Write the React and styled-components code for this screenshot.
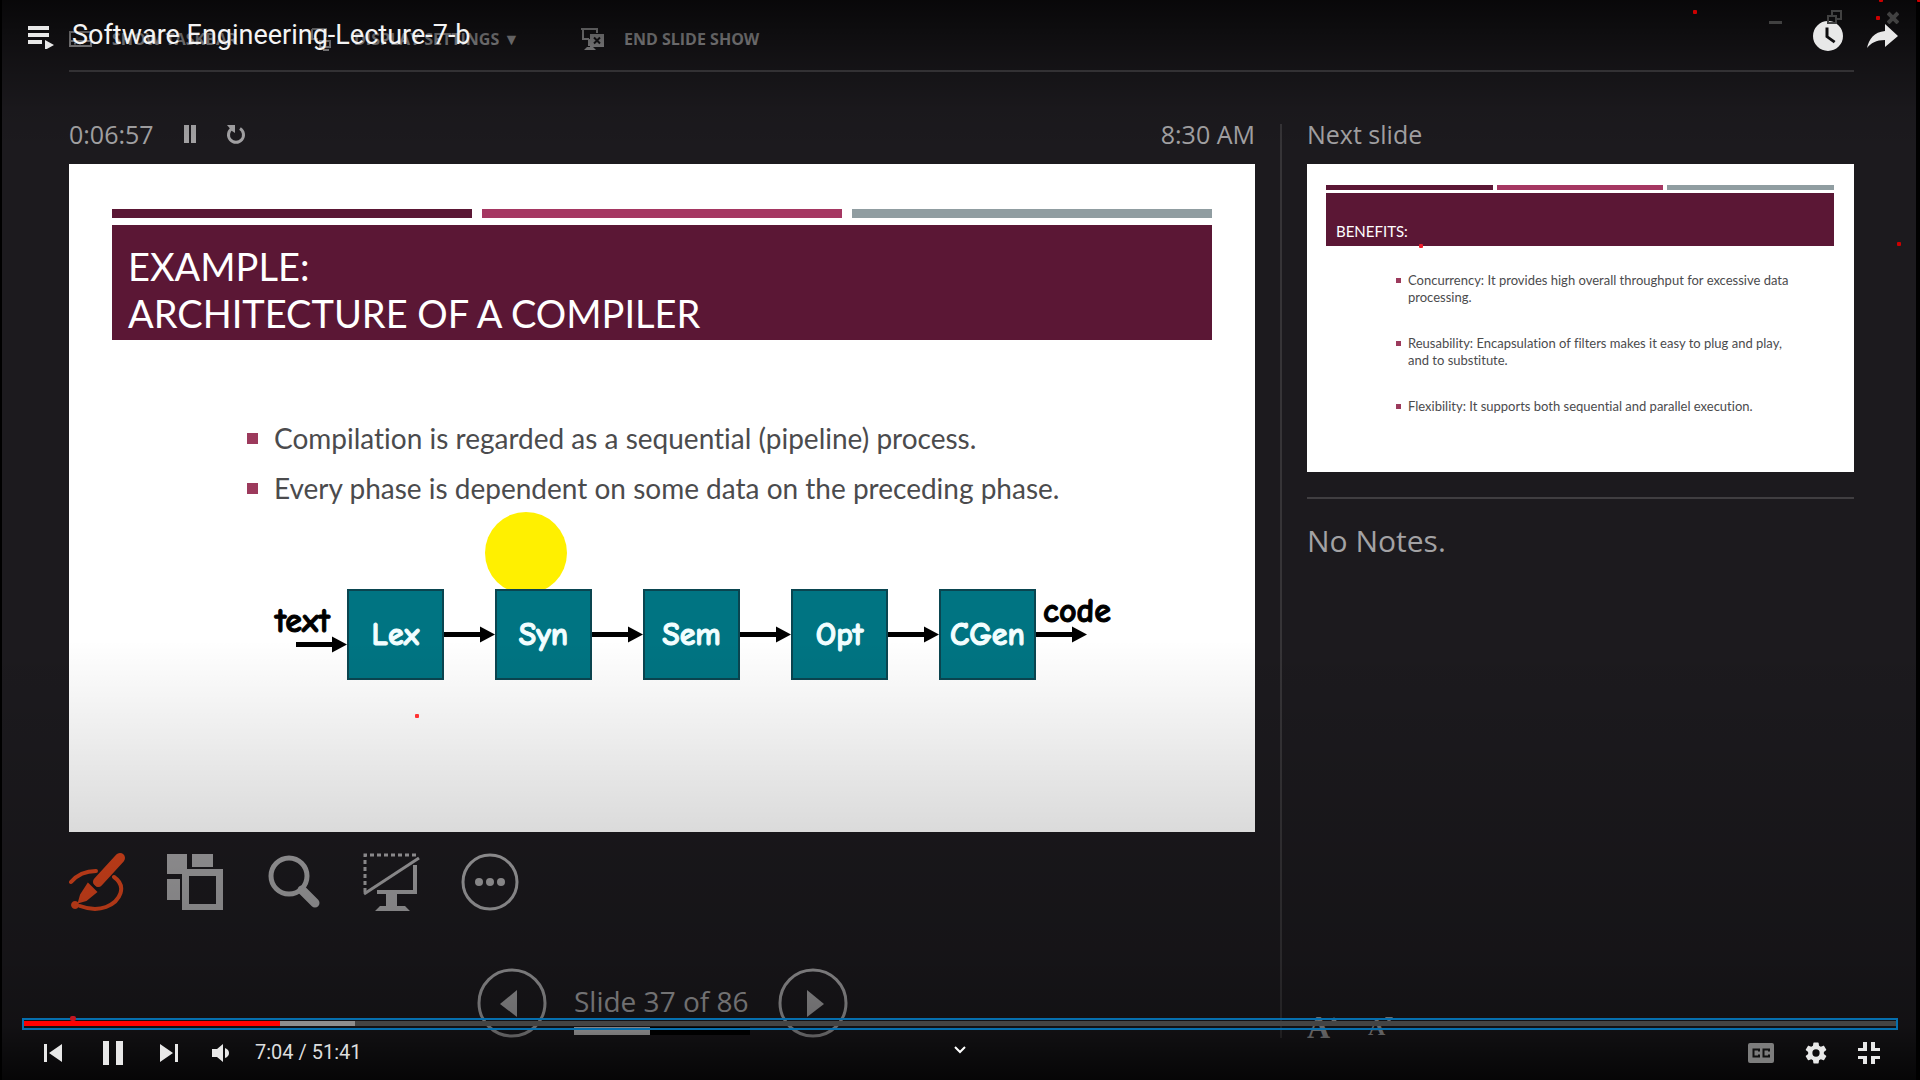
import React from "react";
import styled, { createGlobalStyle } from "styled-components";

const ui = `"Open Sans", "Noto Sans", sans-serif`;
const body = `Lato, "Open Sans", sans-serif`;
const comic = `"Comic Sans MS", "Comic Neue", Lato, sans-serif`;

const Global = createGlobalStyle`
  *, *::before, *::after { box-sizing: border-box; }
  body { margin: 0; background: #000; overflow: hidden; }
  button { border: 0; padding: 0; margin: 0; background: none; color: inherit; font: inherit; display: inline-flex; align-items: center; justify-content: center; }
  h1, h2, p, ul { margin: 0; padding: 0; font-weight: 400; }
  svg { display: block; }
`;

const Player = styled.main`
  position: relative;
  min-height: 100vh;
  background: #000;
  padding: 0 4px 0 2px;
  display: flex;
  overflow: hidden;
`;

/* ---------- presenter view ---------- */
const Presenter = styled.section`
  flex: 1;
  min-width: 0;
  display: flex;
  flex-direction: column;
  background: #1c1a1e;
  color: #a3a2a4;
  font-family: ${ui};
  padding: 0 62px 0 67px;
`;
const TopBar = styled.header`
  height: 72px;
  flex: none;
  display: flex;
  align-items: center;
  padding-top: 8px;
  border-bottom: 2px solid #454346;
`;
const TopAction = styled.button`
  && {
    justify-content: flex-start;
    gap: ${(p) => p.$gap}px;
    width: ${(p) => p.$w}px;
    font-size: 16px;
    line-height: 24px;
    font-weight: 700;
    font-family: ${ui};
    white-space: nowrap;
    color: #b8b7b9;
  }
`;
const Columns = styled.div`
  display: grid;
  grid-template-columns: minmax(0, 1186fr) 2px minmax(0, 547fr);
  column-gap: 25px;
  padding: 48px 0 42px;
  flex: 1;
`;
const Rule = styled.div`
  background: #363437;
  margin-top: 4px;
`;
const MainCol = styled.div`
  display: flex;
  flex-direction: column;
`;
const SideCol = styled.aside`
  display: flex;
  flex-direction: column;
`;
const Status = styled.div`
  display: flex;
  align-items: center;
  gap: 30px;
  height: 28px;
  margin-bottom: 16px;
  font-size: 25px;
  line-height: 28px;
`;
const Clock = styled.time`
  margin-left: auto;
`;
const Slide = styled.article`
  position: relative;
  background: #fff;
  aspect-ratio: ${(p) => p.$ratio};
  padding: ${(p) => p.$pad};
  color: #4b4b4d;
  font-family: ${body};
  font-variant-ligatures: none;
`;
const Stripes = styled.div`
  display: grid;
  grid-template-columns: repeat(3, 1fr);
  gap: ${(p) => p.$gap}px;
  margin-bottom: ${(p) => p.$below}px;
`;
const Stripe = styled.span`
  height: ${(p) => p.$h}px;
  background: ${(p) => p.$c};
`;
const Banner = styled.div`
  display: flex;
  align-items: flex-end;
  height: ${(p) => p.$h}px;
  padding: ${(p) => p.$pad};
  background: #5b1735;
  color: #fff;
`;
const Title = styled.h1`
  font-size: 38px;
  line-height: 47px;
`;
const SmallTitle = styled.h2`
  font-size: 15px;
  line-height: 20px;
`;
const Bullets = styled.ul`
  list-style: none;
  display: flex;
  flex-direction: column;
  gap: ${(p) => p.$gap}px;
  padding: ${(p) => p.$pad};
  font-size: ${(p) => p.$size}px;
  line-height: ${(p) => p.$lh}px;
`;
const Bullet = styled.li`
  display: flex;
  white-space: nowrap;
  gap: ${(p) => p.$gap}px;
  &::before {
    content: "";
    flex: none;
    width: ${(p) => p.$dot}px;
    height: ${(p) => p.$dot}px;
    margin-top: ${(p) => p.$top}px;
    background: #9c3a5c;
  }
`;
const Pipeline = styled.div`
  position: relative;
  display: flex;
  align-items: center;
  margin: 85px 0 0 163px;
  font-family: ${comic};
  font-weight: 700;
  font-size: 34px;
  -webkit-text-stroke: 1px currentColor;
`;
const Spot = styled.span`
  position: absolute;
  left: 210px;
  top: -77px;
  width: 82px;
  height: 82px;
  border-radius: 50%;
  background: #fff000;
`;
const Stage = styled.div`
  position: relative;
  width: 97px;
  height: 91px;
  flex: none;
  display: flex;
  align-items: center;
  justify-content: center;
  background: #007482;
  border: 2px solid #0a4550;
  color: #f2feff;
  font-size: 32px;
`;
const Port = styled.div`
  display: flex;
  flex-direction: column;
  flex: none;
  width: ${(p) => p.$w}px;
  align-items: ${(p) => p.$align};
  padding-bottom: ${(p) => p.$lift}px;
  color: #000;
  line-height: 30px;
`;
const PortLabel = styled.span`
  align-self: ${(p) => p.$side};
`;
const Tools = styled.div`
  display: flex;
  gap: 41px;
  margin-top: 21px;
`;
const Pager = styled.nav`
  display: flex;
  justify-content: center;
  align-items: flex-start;
  gap: 27px;
  margin-top: 56px;
`;
const PageInfo = styled.div`
  width: 176px;
  font-size: 28px;
  line-height: 32px;
  padding-top: 18px;
  white-space: nowrap;
`;
const Meter = styled.div`
  height: 8px;
  margin-top: 10px;
  background: #000;
`;
const MeterFill = styled.div`
  height: 100%;
  background: #d0cfd1;
`;
const Notes = styled.p`
  margin-top: 25px;
  padding-top: 23px;
  border-top: 2px solid #403e41;
  font-size: 30px;
  line-height: 38px;
`;
const FontTools = styled.div`
  display: flex;
  align-items: flex-end;
  gap: 30px;
  margin-top: auto;
  font-family: "Liberation Serif", serif;
  font-weight: 700;
`;
const FontButton = styled.button`
  && {
    align-items: flex-start;
    font-size: ${(p) => p.$size}px;
    line-height: 21px;
    font-family: "Liberation Serif", serif;
    font-weight: 700;
  }
`;

/* ---------- player chrome, drawn over the video ---------- */
const Chrome = styled.div`
  position: absolute;
  inset: 0;
  display: flex;
  flex-direction: column;
  color: #e8e8e8;
  font-family: Roboto, sans-serif;
  background:
    linear-gradient(to bottom, rgba(0,0,0,.7) 0, rgba(0,0,0,.32) 60px, rgba(0,0,0,.07) 110px, rgba(0,0,0,0) 150px),
    linear-gradient(to top, rgba(0,0,0,.78) 0, rgba(0,0,0,.35) 55px, rgba(0,0,0,.24) 120px, rgba(0,0,0,.14) 250px, rgba(0,0,0,.05) 370px, rgba(0,0,0,0) 440px);
`;
const Heading = styled.header`
  display: flex;
  align-items: center;
  height: 72px;
  padding: 0 22px 0 28px;
`;
const VideoTitle = styled.h1`
  font-size: 27px;
  line-height: 32px;
  margin-left: 17px;
  padding-bottom: 2px;
  color: #f4f4f4;
`;
const HeadActions = styled.div`
  display: flex;
  align-items: center;
  gap: 24px;
  margin-left: auto;
`;
const Controls = styled.footer`
  margin-top: auto;
  padding: 0 22px;
`;
const Track = styled.div`
  position: relative;
  height: 12px;
  border: 2px solid #066fae;
  padding: 1px 0 2px;
`;
const Rail = styled.div`
  display: flex;
  height: 5px;
  background: #444;
`;
const Part = styled.div`
  background: ${(p) => p.$c};
`;
const Knob = styled.span`
  position: absolute;
  left: 46px;
  top: -4px;
  width: 6px;
  height: 5px;
  border-radius: 2px;
  background: #c41722;
`;
const Seek = styled.input`
  position: absolute;
  inset: 0;
  width: 100%;
  height: 100%;
  margin: 0;
  opacity: 0;
`;
const Row = styled.div`
  display: grid;
  grid-template-columns: 1fr auto 1fr;
  align-items: center;
  height: 50px;
  padding-bottom: 4px;
`;
const Group = styled.div`
  display: flex;
  align-items: center;
  justify-content: ${(p) => (p.$end ? "flex-end" : "flex-start")};
  gap: ${(p) => p.$gap}px;
  padding: 0 ${(p) => (p.$end ? 18 : 0)}px 0 ${(p) => (p.$end ? 0 : 22)}px;
`;
const Time = styled.span`
  font-size: 20px;
  line-height: 24px;
  color: #ddd;
  margin-left: -8px;
  padding-bottom: 2px;
`;
const WindowButtons = styled.div`
  position: absolute;
  top: 10px;
  right: 21px;
  display: flex;
  align-items: center;
  gap: 45px;
  color: #414141;
`;
const Mark = styled.span`
  position: absolute;
  width: 4px;
  height: 4px;
  border-radius: 1px;
  background: ${(p) => p.$c || "#c00"};
`;

const marks = [
  { x: 1693, y: 10 }, { x: 1876, y: 16 }, { x: 1879, y: -2 }, { x: 1917, y: -2 },
  { x: 1897, y: 242 }, { x: 1419, y: 244, c: "#f01f2d" }, { x: 415, y: 714, c: "#f33" },
];

const Arrow = () => (
  <svg width="51" height="17" viewBox="0 0 51 17" fill="#000">
    <path d="M0 6h36V0.500l15 8-15 8V11H0z" />
  </svg>
);

const Icon = ({ w, h, label, vb, children }) => (
  <button type="button" aria-label={label}>
    <svg width={w} height={h} viewBox={vb || `0 0 ${w} ${h}`} fill="currentColor">{children}</svg>
  </button>
);

const stages = ["Lex", "Syn", "Sem", "Opt", "CGen"];
const stripeColors = ["#5b1735", "#a53762", "#909da1"];

export default function App() {
  return (
    <Player>
      <Global />
      <Presenter>
        <TopBar>
          <TopAction $w={241} $gap={20}>
            <svg width="23" height="16" viewBox="0 0 23 16" fill="none" stroke="currentColor" strokeWidth="2"><path d="M1 1h21v14H1zM1 10h21M5 12.500h2M10 12.500h2" /></svg>
            SHOW TASKBAR
          </TopAction>
          <TopAction $w={271} $gap={22}>
            <svg width="22" height="24" viewBox="0 0 22 24" fill="none" stroke="currentColor" strokeWidth="2"><path d="M2 2h14v8M2 2v10h6M10 14h10v6H10zM13 23h6" /></svg>
            DISPLAY SETTINGS ▼
          </TopAction>
          <TopAction $w={200} $gap={20}>
            <svg width="23" height="24" viewBox="0 0 23 24" fill="none" stroke="currentColor" strokeWidth="2">
              <path d="M0 2h17M2 2v10h6M16 2v4M8 12v7" />
              <path d="M10 8h12v11H10z" fill="currentColor" />
              <path d="M13 10.500l6 6M19 10.500l-6 6" stroke="#1c1a1e" />
              <path d="M3 23l3-3h6l3 3z" fill="currentColor" stroke="none" />
            </svg>
            END SLIDE SHOW
          </TopAction>
        </TopBar>
        <Columns>
          <MainCol>
            <Status>
              <span>0:06:57</span>
              <Icon w={12} h={20} label="Pause timer"><path d="M0 1h5v18H0zM7 1h5v18H7z" /></Icon>
              <Icon w={20} h={20} label="Restart timer">
                <path d="M14 4.500a7.500 7.500 0 1 1-8 0" fill="none" stroke="currentColor" strokeWidth="3" />
                <path d="M1 1h8v8l-3-2z" />
              </Icon>
              <Clock>8:30 AM</Clock>
            </Status>
            <Slide $ratio="1186 / 668" $pad="45px 43px 0 43px">
              <Stripes $gap={10} $below={7}>
                {stripeColors.map((c) => <Stripe key={c} $c={c} $h={9} />)}
              </Stripes>
              <Banner $h={115} $pad="0 16px 3px">
                <Title>EXAMPLE:<br />ARCHITECTURE OF A COMPILER</Title>
              </Banner>
              <Bullets $pad="82px 0 0 135px" $gap={18} $size={28} $lh={32}>
                <Bullet $gap={16} $dot={11} $top={11}>Compilation is regarded as a sequential (pipeline) process.</Bullet>
                <Bullet $gap={16} $dot={11} $top={11}>Every phase is dependent on some data on the preceding phase.</Bullet>
              </Bullets>
              <Pipeline>
                <Spot />
                <Port $w={72} $align="flex-end" $lift={10}><PortLabel $side="flex-start">text</PortLabel><Arrow /></Port>
                {stages.map((s, i) => (
                  <React.Fragment key={s}>
                    {i > 0 && <Arrow />}
                    <Stage>{s}</Stage>
                  </React.Fragment>
                ))}
                <Port $w={75} $align="flex-start" $lift={30}><PortLabel $side="flex-end">code</PortLabel><Arrow /></Port>
              </Pipeline>
            </Slide>
            <Tools>
              <Icon w={57} h={58} label="Pen and laser pointer tools">
                <g fill="none" stroke="#d8441c" strokeLinecap="round">
                  <path d="M2 29C8 22 17 18 27 18M45 24C58 33 52 48 37 54C29 57 19 56 11 53" strokeWidth="4" />
                  <path d="M51 5L29 29" strokeWidth="10" />
                </g>
                <path d="M19 31l8 8L17 47l-7 2 2-7zM6 49a3 3 0 1 0 .1 0z" fill="#d8441c" stroke="#d8441c" strokeWidth="2" />
                <path d="M20 28l10 10" stroke="#18161a" strokeWidth="2" />
              </Icon>
              <Icon w={57} h={58} label="See all slides">
                <path d="M0 1h20v15H15v5H0zM25 1h21v13H25zM0 26h13v21H0zM15 16h41v41H15zM22 23v28h27V23z" fillRule="evenodd" />
              </Icon>
              <Icon w={57} h={58} label="Zoom into the slide">
                <g fill="none" stroke="currentColor"><circle cx="24" cy="23" r="18" strokeWidth="5" /><path d="M37 37L50 50" strokeWidth="9" strokeLinecap="round" /></g>
              </Icon>
              <Icon w={57} h={58} label="Black or unblack slide show">
                <g fill="none" stroke="currentColor">
                  <path d="M2 39V2H53" strokeWidth="3" strokeDasharray="4 3" />
                  <path d="M1 41L56 5" strokeWidth="3" />
                  <path d="M52 12V39H14" strokeWidth="4" />
                </g>
                <path d="M23 39h11v14h8l5 5H12l5-5h6z" />
              </Icon>
              <Icon w={58} h={58} label="More slide show options">
                <circle cx="29" cy="29" r="27" fill="none" stroke="currentColor" strokeWidth="3" />
                <circle cx="18" cy="29" r="4" /><circle cx="29" cy="29" r="4" /><circle cx="40" cy="29" r="4" />
              </Icon>
            </Tools>
            <Pager>
              <Icon w={71} h={71} label="Previous slide">
                <circle cx="36" cy="36" r="33" fill="none" stroke="currentColor" strokeWidth="3" /><path d="M41 23v27L24 37z" />
              </Icon>
              <PageInfo>
                Slide 37 of 86
                <Meter><MeterFill style={{ width: `${(37 / 86) * 100}%` }} /></Meter>
              </PageInfo>
              <Icon w={71} h={71} label="Next slide">
                <circle cx="36" cy="36" r="33" fill="none" stroke="currentColor" strokeWidth="3" /><path d="M30 23v27l17-13z" />
              </Icon>
            </Pager>
          </MainCol>
          <Rule />
          <SideCol>
            <Status>Next slide</Status>
            <Slide $ratio="547 / 308" $pad="21px 20px 0 19px">
              <Stripes $gap={4} $below={3}>
                {stripeColors.map((c) => <Stripe key={c} $c={c} $h={5} />)}
              </Stripes>
              <Banner $h={53} $pad="0 10px 5px"><SmallTitle>BENEFITS:</SmallTitle></Banner>
              <Bullets $pad="26px 0 0 70px" $gap={29} $size={13} $lh={17}>
                <Bullet $gap={7} $dot={5} $top={6}>Concurrency: It provides high overall throughput for excessive data<br />processing.</Bullet>
                <Bullet $gap={7} $dot={5} $top={6}>Reusability: Encapsulation of filters makes it easy to plug and play,<br />and to substitute.</Bullet>
                <Bullet $gap={7} $dot={5} $top={6}>Flexibility: It supports both sequential and parallel execution.</Bullet>
              </Bullets>
            </Slide>
            <Notes>No Notes.</Notes>
            <FontTools>
              <FontButton $size={32} aria-label="Make the text larger">A<svg width="8" height="6" viewBox="0 0 8 6" fill="currentColor"><path d="M0 6L4 0l4 6z" /></svg></FontButton>
              <FontButton $size={24} aria-label="Make the text smaller">A<svg width="8" height="6" viewBox="0 0 8 6" fill="currentColor"><path d="M0 0h8L4 6z" /></svg></FontButton>
            </FontTools>
          </SideCol>
        </Columns>
      </Presenter>

      <Chrome>
        <WindowButtons>
          <Icon w={13} h={14} label="Minimize"><path d="M0 11h13v3H0z" /></Icon>
          <Icon w={15} h={14} label="Restore"><path d="M1 6h8v7H1zM5 5V1h9v8h-4" fill="none" stroke="currentColor" strokeWidth="2" /></Icon>
          <Icon w={12} h={14} label="Close"><path d="M1 3l10 10M11 3L1 13" fill="none" stroke="currentColor" strokeWidth="4" /></Icon>
        </WindowButtons>
        <Heading>
          <Icon w={27} h={26} label="Playlist"><path d="M0 3h21v4H0zM0 10h21v4H0zM0 17h14v4H0zM17 17l9 5-9 5z" /></Icon>
          <VideoTitle>Software Engineering-Lecture-7-b</VideoTitle>
          <HeadActions>
            <Icon w={30} h={30} label="Watch later"><path fillRule="evenodd" d="M15 0a15 15 0 1 0 0 30a15 15 0 1 0 0-30zM12.500 6.500h3v8.500l7 5-1.700 2.300-8.300-6z" /></Icon>
            <Icon w={31} h={26} label="Share"><path d="M18 1l13 12-13 11v-7C9 17 4 20 0 25C2 16 7 9 18 8z" /></Icon>
          </HeadActions>
        </Heading>
        <Controls>
          <Track>
            <Rail>
              <Part $c="#f00" style={{ width: "13.7%" }} />
              <Part $c="#8e8e8e" style={{ width: "4%" }} />
            </Rail>
            <Knob />
            <Seek type="range" aria-label="Seek" min="0" max="3101" defaultValue="424" />
          </Track>
          <Row>
            <Group $gap={34}>
              <Icon w={18} h={18} label="Previous"><path d="M0 0h3v18H0zM18 0v18L5 9z" /></Icon>
              <Icon w={30} h={24} label="Pause"><path d="M7 0h6v24H7zM20 0h7v24h-7z" /></Icon>
              <Icon w={18} h={18} label="Next"><path d="M15 0h3v18h-3zM0 0v18l13-9z" /></Icon>
              <Icon w={17} h={18} label="Mute"><path d="M0 5h5l6-5v18l-6-5H0zM13 4q4 1.500 4 5t-4 5z" /></Icon>
              <Time>7:04 / 51:41</Time>
            </Group>
            <Icon w={14} h={14} label="More videos"><path d="M2 1l5 5 5-5" fill="none" stroke="#fff" strokeWidth="2" /></Icon>
            <Group $end $gap={31}>
              <Icon w={26} h={20} label="Subtitles">
                <rect width="26" height="20" rx="2" fill="#7d7d7d" />
                <path d="M11 8.500V6.500H5.500v7H11v-2M21 8.500V6.500h-5.500v7H21v-2" fill="none" stroke="#111" strokeWidth="2" />
              </Icon>
              <Icon w={22} h={22} vb="2 2 20 20" label="Settings"><path d="M19.140 12.940c.04-.3.060-.61.060-.94s-.02-.64-.07-.94l2.030-1.580a.49.49 0 0 0 .12-.61l-1.920-3.320a.49.49 0 0 0-.59-.22l-2.390.96a7 7 0 0 0-1.620-.94L14.400 2.810a.48.48 0 0 0-.48-.41h-3.840a.47.47 0 0 0-.47.410l-.36 2.540c-.59.24-1.130.57-1.620.94l-2.390-.96a.48.48 0 0 0-.59.220L2.740 8.870a.47.47 0 0 0 .12.610l2.030 1.580a6 6 0 0 0 0 1.880l-2.030 1.580a.49.49 0 0 0-.12.610l1.920 3.320c.12.220.37.290.59.220l2.390-.96c.5.380 1.030.7 1.620.94l.36 2.540c.05.240.24.410.48.410h3.840c.24 0 .44-.17.470-.41l.36-2.540c.59-.24 1.130-.56 1.620-.94l2.390.96c.22.080.47 0 .59-.22l1.920-3.320a.47.47 0 0 0-.12-.61zM12 15.300a3.300 3.300 0 1 1 0-6.600 3.300 3.300 0 0 1 0 6.600z" /></Icon>
              <Icon w={22} h={22} label="Exit full screen"><path d="M5 0h4v9H0V6h5zM13 0h4v6h5v3h-9zM0 14h9v8H5v-5H0zM13 14h9v3h-5v5h-4z" /></Icon>
            </Group>
          </Row>
        </Controls>
        {marks.map((m) => <Mark key={`${m.x}-${m.y}`} $c={m.c} style={{ left: m.x, top: m.y }} />)}
      </Chrome>
    </Player>
  );
}
